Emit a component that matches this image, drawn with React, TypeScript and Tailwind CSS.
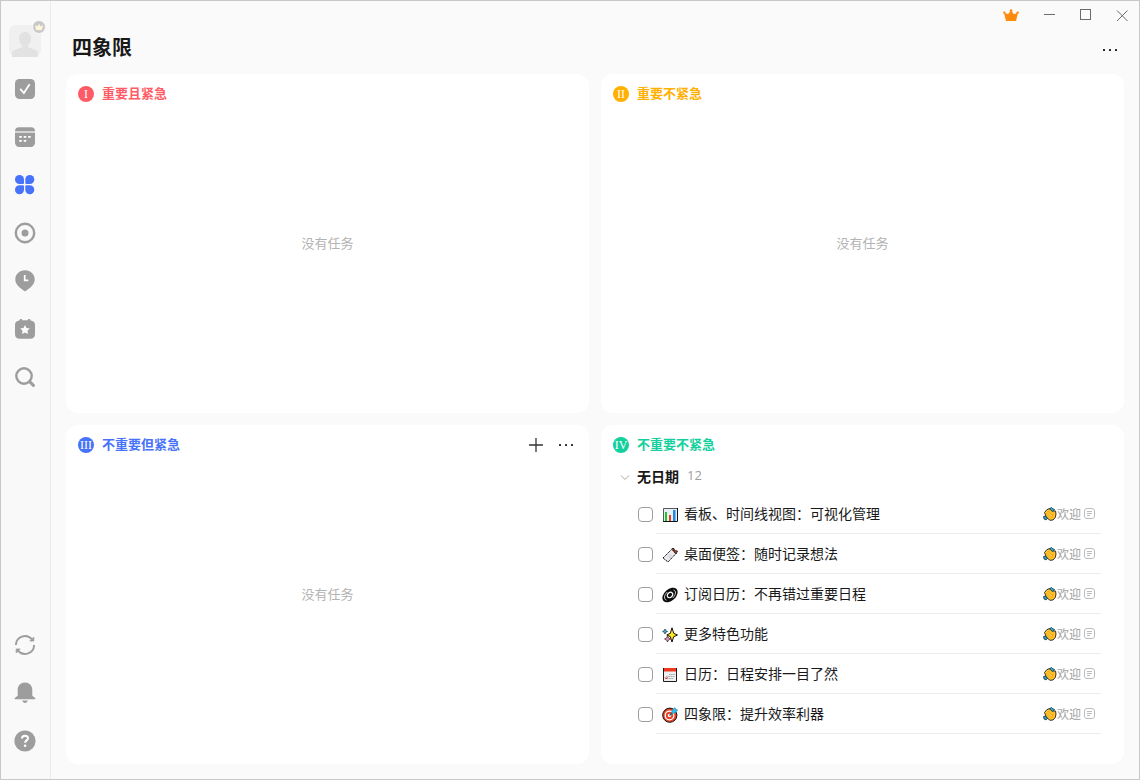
import type { ReactNode } from 'react';

interface Task {
  id: number;
  title: string;
  icon: ReactNode;
}

interface Quadrant {
  id: string;
  numeral: string;
  title: string;
  textClass: string;
  badgeClass: string;
  active?: boolean;
  tasks?: Task[];
}

/* 侧边栏图标 */

const CheckSquareIcon = () => (
  <svg width="20" height="20" viewBox="0 0 20 20" fill="none">
    <rect width="20" height="20" rx="4.5" fill="currentColor" />
    <path d="M5.2 9.800l3.700 4.300 5.700-8.800" stroke="#fff" strokeWidth="1.800" />
  </svg>
);

const CalendarIcon = () => (
  <svg width="20" height="20" viewBox="0 0 20 20" fill="none">
    <path d="M0 4.2A4 4 0 014 .2h12a4 4 0 014 4z" fill="currentColor" />
    <path d="M0 4h20v2H0z" fill="#d4d4d4" />
    <path d="M0 6h20v9.8a4.2 4.2 0 01-4.2 4.2H4.2A4.2 4.2 0 010 15.8z" fill="currentColor" />
    <path
      d="M4.2 9h2.6v1.7H4.2zM8.7 9h2.6v1.7H8.7zM13.2 9h2.6v1.7h-2.6zM4.2 13h2.6v1.7H4.2zM8.7 13h2.6v1.7H8.7z"
      fill="#fff"
    />
  </svg>
);

const MatrixIcon = () => (
  <svg width="20" height="20" viewBox="0 0 20 20" fill="currentColor">
    <path d="M4.5 0A4.5 4.5 0 019 4.5V8a1 1 0 01-1 1H4.5a4.5 4.5 0 010-9z" />
    <path d="M14.8 0a4.5 4.5 0 010 9h-3.5a1 1 0 01-1-1V4.5A4.5 4.5 0 0114.8 0z" />
    <path d="M4.5 10.3H8a1 1 0 011 1v3.5a4.5 4.5 0 11-4.5-4.5z" />
    <path d="M11.3 10.3h3.5a4.5 4.5 0 11-4.5 4.5v-3.5a1 1 0 011-1z" />
  </svg>
);

const FocusIcon = () => (
  <svg width="22" height="22" viewBox="0 0 22 22" fill="none">
    <circle cx="11" cy="11" r="9.2" stroke="currentColor" strokeWidth="2.4" />
    <circle cx="11" cy="11" r="3.5" fill="currentColor" />
  </svg>
);

const HabitIcon = () => (
  <svg width="20" height="22" viewBox="0 0 20 22" fill="none">
    <path
      d="M10 .3c5.600 0 9.700 4.100 9.700 9.200 0 3.500-2 6-4.700 8.300l-3.600 2.800a2.200 2.200 0 01-2.800 0L5 17.800C2.300 15.500.3 13 .3 9.500.3 4.400 4.400.3 10 .3z"
      fill="currentColor"
    />
    <path d="M9.700 5v5.300h3.600" stroke="#fff" strokeWidth="1.700" />
  </svg>
);

const CountdownIcon = () => (
  <svg width="20" height="20" viewBox="0 0 20 20" fill="none">
    <path
      d="M5.900 0c.8 0 1.300.5 1.400 1.300h5.400c.1-.8.600-1.300 1.400-1.300.9 0 1.500.6 1.500 1.400 2.600.2 4.400 1.800 4.400 4.300v9.600c0 2.800-1.800 4.500-4.600 4.500H4.600C1.800 19.800 0 18.100 0 15.300V5.700C0 3.200 1.800 1.600 4.400 1.400 4.400.600 5 0 5.900 0z"
      fill="currentColor"
    />
    <path d="M10 6l1.500 3 3.300.5-2.400 2.300.6 3.300-3-1.600-3 1.600.6-3.300-2.400-2.300 3.300-.5z" fill="#fff" />
  </svg>
);

const SearchIcon = () => (
  <svg width="20" height="20" viewBox="0 0 20 20" fill="none" stroke="currentColor">
    <circle cx="9" cy="9" r="7.700" strokeWidth="2.400" />
    <path d="M14.600 14.600l3.800 3.800" strokeWidth="3" strokeLinecap="round" />
  </svg>
);

const SyncIcon = () => (
  <svg width="20" height="20" viewBox="0 0 20 20" fill="none" stroke="currentColor" strokeWidth="1.900">
    <path d="M.9 10A9.100 9.100 0 0116.800 4.200" />
    <path d="M19.100 10A9.100 9.100 0 013.200 15.800" />
    <path d="M18.800 2v4h-4z" fill="currentColor" strokeWidth=".8" />
    <path d="M1.200 18v-4h4z" fill="currentColor" strokeWidth=".8" />
  </svg>
);

const BellIcon = () => (
  <svg width="22" height="22" viewBox="0 0 22 22" fill="currentColor">
    <path d="M11 .4c4.300 0 7.300 3.200 7.300 7.300v6.100l2.900 2.300c.6.500.3 1.100-.4 1.100H1.200c-.7 0-1-.6-.4-1.100l2.900-2.300V7.700C3.700 3.600 6.700.4 11 .4z" />
    <path d="M8.200 18.600h5.600c-.4 1.500-1.500 2.400-2.800 2.400s-2.400-.9-2.800-2.400z" />
  </svg>
);

const HelpIcon = () => (
  <svg width="22" height="22" viewBox="0 0 22 22" fill="none">
    <circle cx="11" cy="11" r="10.600" fill="currentColor" />
    <path
      d="M8 8.400c0-1.700 1.300-2.700 3-2.700s3 1 3 2.500c0 2.100-2.900 2.300-2.900 4.600"
      stroke="#fff"
      strokeWidth="2"
    />
    <circle cx="11.100" cy="15.800" r="1.300" fill="#fff" />
  </svg>
);

const CrownIcon = () => (
  <svg width="16" height="14" viewBox="0 0 16 14" fill="#ff8a0d">
    <path d="M3 13L.9 4.400l4.200 1.900L8 2l2.900 4.300 4.200-1.900L13 13z" />
    <circle cx="1.300" cy="4.600" r="1.200" />
    <circle cx="8" cy="2.600" r="1.300" />
    <circle cx="14.700" cy="4.600" r="1.200" />
  </svg>
);

const MoreIcon = () => (
  <svg width="16" height="4" viewBox="0 0 16 4" fill="currentColor">
    <rect x="1" y="1" width="2" height="2" rx=".5" />
    <rect x="7" y="1" width="2" height="2" rx=".5" />
    <rect x="13" y="1" width="2" height="2" rx=".5" />
  </svg>
);

const NoteIcon = () => (
  <svg width="11" height="11" viewBox="0 0 11 11" fill="none" stroke="#bdbdbd">
    <rect x=".5" y=".5" width="10" height="10" rx="2.500" />
    <path d="M3 3.500h5M3 5.500h5M3 7.500h3" />
  </svg>
);

/* 任务前的彩色小图标 */

const ChartEmoji = () => (
  <svg width="16" height="16" viewBox="0 0 16 16">
    <path d="M1 1h14v14H1z" fill="#e9eef3" />
    <path d="M1.500 15V1.500H15" fill="none" stroke="#55585c" />
    <path d="M3 5h2v9H3z" fill="#1fc42b" />
    <path d="M7 8h2v6H7z" fill="#ee3b22" />
    <path d="M11 3h2.500v11H11z" fill="#2288e6" />
    <path d="M1 14.500h14.500V1" fill="none" stroke="#111" />
  </svg>
);

const TagEmoji = () => (
  <svg width="16" height="16" viewBox="0 0 16 16">
    <path d="M1 11L9.500 2.500l4.500 4L6 15z" fill="#e9eaed" stroke="#111" strokeDasharray="1.600 .6" />
    <path d="M10 1.500h2l.5 2 3 .5-1.500 3z" fill="#ef3d1c" stroke="#111" strokeWidth=".8" />
    <path d="M6 8.500l2.500 2.500M8 7.500l1.500 1.500" stroke="#b9bcc3" />
  </svg>
);

const GalaxyEmoji = () => (
  <svg width="16" height="16" viewBox="0 0 16 16" fill="none">
    <g transform="rotate(-42 8 8)">
      <ellipse cx="8" cy="8" rx="8.800" ry="5.800" fill="#0c0c0c" />
      <path d="M2 9.500A6.500 4 0 018 4M14 6.500A6.500 4 0 018 12" stroke="#e8e8e8" strokeWidth=".8" />
      <ellipse cx="8" cy="8" rx="3" ry="2.300" stroke="#fff" strokeWidth="1.200" />
    </g>
  </svg>
);

const SparklesEmoji = () => (
  <svg width="16" height="16" viewBox="0 0 16 16" stroke="#111" strokeLinejoin="round">
    <path d="M10 .8l1.700 5.500L15.500 8l-3.800 1.700L10 15l-1.700-5.300L4.800 8l3.500-1.700z" fill="#ffea1a" />
    <path d="M3 2l.8 1.700 1.700.8-1.700.8L3 7l-.8-1.700L.6 4.500l1.600-.8z" fill="#27b8e8" strokeWidth=".6" />
    <path d="M5.500 9l1 2 2 1-2 1-1 2-1-2-2-1 2-1z" fill="#f48ac0" strokeWidth=".6" />
  </svg>
);

const DateEmoji = () => (
  <svg width="16" height="16" viewBox="0 0 16 16">
    <path d="M1 1h14v14H1z" fill="#eceef0" />
    <path d="M1 1h14v3.500H1z" fill="#ed3a1d" />
    <path d="M7 7.500h6M4 9.500h9M5 11.500h6" stroke="#a3a7ab" strokeDasharray="1.500 .7" />
    <path d="M3 10.500l1 1.500 1.500-2" fill="none" stroke="#ed3a1d" />
    <path d="M1.500 1v13.500h13V1" fill="none" stroke="#1b1b1b" />
  </svg>
);

const TargetEmoji = () => (
  <svg width="16" height="16" viewBox="0 0 16 16" fill="none">
    <circle cx="7.800" cy="8.200" r="7.100" fill="#ee4123" stroke="#111" />
    <circle cx="7.500" cy="8.500" r="4.300" stroke="#fff" strokeWidth="1.300" />
    <circle cx="7.500" cy="8.500" r="1.700" fill="#fff" />
    <path d="M7.500 8.500L12 4" stroke="#14657d" strokeWidth="1.200" />
    <path d="M9.800 3.500L13 .6l.7 1.700 2 .7-3 3.200-2.500.2z" fill="#31bce9" stroke="#2390b5" strokeWidth=".6" />
  </svg>
);

const ClapEmoji = () => (
  <svg width="14" height="14" viewBox="0 0 14 14" fill="none">
    <path
      d="M1.500 5.500L4 2.500l3-1 3 2.300 2.500.2.500 3-.7 3.500L10 13l-3 .3-3.500-2.800z"
      fill="#ffbf2a"
      stroke="#222"
      strokeWidth=".9"
    />
    <path d="M3.500 6l3 3M5.500 4.500l3 3M9.500 7v4" stroke="#e59a18" strokeWidth=".7" strokeDasharray="1 .7" />
    <path d="M6.500 1.800L8.500.5l1.300 1.200 1.700.8-1.700 2.200z" fill="#2fa9cc" stroke="#102e3a" strokeWidth=".8" />
    <path d="M.6 9.500l1.900-.4 1.900 2-1.400 1.800-2-1z" fill="#2fa9cc" stroke="#102e3a" strokeWidth=".8" />
  </svg>
);

const navItems = [
  { label: '任务', icon: <CheckSquareIcon /> },
  { label: '日历', icon: <CalendarIcon /> },
  { label: '四象限', icon: <MatrixIcon />, active: true },
  { label: '专注', icon: <FocusIcon /> },
  { label: '习惯', icon: <HabitIcon /> },
  { label: '倒数日', icon: <CountdownIcon /> },
  { label: '搜索', icon: <SearchIcon /> },
];

const footerItems = [
  { label: '同步', icon: <SyncIcon /> },
  { label: '通知', icon: <BellIcon /> },
  { label: '帮助', icon: <HelpIcon /> },
];

const tasks: Task[] = [
  { id: 1, title: '看板、时间线视图：可视化管理', icon: <ChartEmoji /> },
  { id: 2, title: '桌面便签：随时记录想法', icon: <TagEmoji /> },
  { id: 3, title: '订阅日历：不再错过重要日程', icon: <GalaxyEmoji /> },
  { id: 4, title: '更多特色功能', icon: <SparklesEmoji /> },
  { id: 5, title: '日历：日程安排一目了然', icon: <DateEmoji /> },
  { id: 6, title: '四象限：提升效率利器', icon: <TargetEmoji /> },
];

const quadrants: Quadrant[] = [
  { id: 'q1', numeral: 'I', title: '重要且紧急', textClass: 'text-[#ff5b66]', badgeClass: 'bg-[#ff5b66]' },
  { id: 'q2', numeral: 'II', title: '重要不紧急', textClass: 'text-[#ffb000]', badgeClass: 'bg-[#ffb000]' },
  {
    id: 'q3',
    numeral: 'III',
    title: '不重要但紧急',
    textClass: 'text-[#4772fa]',
    badgeClass: 'bg-[#4772fa]',
    active: true,
  },
  {
    id: 'q4',
    numeral: 'IV',
    title: '不重要不紧急',
    textClass: 'text-[#13d09d]',
    badgeClass: 'bg-[#13d09d]',
    tasks,
  },
];

function NavButton({ label, icon, active }: { label: string; icon: ReactNode; active?: boolean }) {
  return (
    <button
      type="button"
      aria-label={label}
      className={`flex h-12 w-12 items-center justify-center ${active ? 'text-[#4772fa]' : 'text-[#9d9d9d]'}`}
    >
      {icon}
    </button>
  );
}

function Sidebar() {
  return (
    <nav className="flex w-[50px] shrink-0 flex-col items-start border-r border-[#ebebeb] bg-[#f9f9f9] pt-4 pb-3.5">
      <button type="button" aria-label="账户" className="relative flex h-12 w-12 items-center justify-center">
        <svg width="32" height="32" viewBox="0 0 32 32">
          <rect width="32" height="32" rx="7" fill="#f0f0f0" />
          <path
            d="M16 7c3.600 0 6 2.600 6 6.300 0 3-1.300 5.700-3 7.200v1.700l7.500 2.700c1.500.6 2.500 1.700 2.500 3.300V32H3v-3.800c0-1.600 1-2.700 2.500-3.300l7.500-2.700v-1.700c-1.700-1.500-3-4.200-3-7.200C10 9.600 12.400 7 16 7z"
            fill="#e2e2e2"
          />
        </svg>
        <svg className="absolute top-[3px] right-[3px]" width="14" height="14" viewBox="0 0 14 14">
          <circle cx="7" cy="7" r="6.500" fill="#c8c8c8" stroke="#f9f9f9" />
          <path d="M4.300 9.700l-.7-4 2 1.100L7 4.500l1.400 2.300 2-1.100-.7 4z" fill="#fff6dd" stroke="#fff6dd" strokeWidth=".8" />
        </svg>
      </button>
      {navItems.map((item) => (
        <NavButton key={item.label} {...item} />
      ))}
      <div className="mt-auto">
        {footerItems.map((item) => (
          <NavButton key={item.label} {...item} />
        ))}
      </div>
    </nav>
  );
}

function WindowControls() {
  return (
    <div className="flex h-7 items-center justify-end text-[#6b6b6b]">
      <button type="button" aria-label="高级会员" className="flex h-7 w-10 items-center justify-center">
        <CrownIcon />
      </button>
      <button type="button" aria-label="最小化" className="flex h-7 w-9 items-center justify-center">
        <svg width="12" height="12" viewBox="0 0 12 12" stroke="currentColor">
          <path d="M1 5.500h11" />
        </svg>
      </button>
      <button type="button" aria-label="最大化" className="flex h-7 w-9 items-center justify-center">
        <svg width="12" height="12" viewBox="0 0 12 12" fill="none" stroke="currentColor">
          <rect x="1.500" y=".5" width="10" height="10" />
        </svg>
      </button>
      <button type="button" aria-label="关闭" className="flex h-7 w-9 items-center justify-center">
        <svg width="14" height="14" viewBox="0 0 14 14" stroke="currentColor">
          <path d="M3 2.500l10.500 10.500M13.500 2.500L3 13" />
        </svg>
      </button>
    </div>
  );
}

function TaskRow({ task }: { task: Task }) {
  return (
    <li className="flex h-10 items-center gap-[3px]">
      <input
        id={`task-${task.id}`}
        type="checkbox"
        className="size-[15px] shrink-0 appearance-none rounded-[4px] border border-[#9f9f9f] bg-white checked:bg-[#9f9f9f]"
      />
      <div className="flex h-full min-w-0 flex-1 items-center border-b border-[#ededed] pr-1.5 pl-1.5">
        <label htmlFor={`task-${task.id}`} className="flex min-w-0 flex-1 items-center gap-1.5">
          <span className="shrink-0 pt-0.5">{task.icon}</span>
          <span className="truncate pb-0.5 text-sm text-[#191919]">{task.title}</span>
        </label>
        <span className="flex shrink-0 items-center text-xs text-[#a0a0a0]">
          <ClapEmoji />
          <span className="mr-[3px]">欢迎</span>
          <NoteIcon />
        </span>
      </div>
    </li>
  );
}

function QuadrantCard({ quadrant }: { quadrant: Quadrant }) {
  return (
    <section className="flex min-h-0 flex-col overflow-hidden rounded-xl bg-white">
      <header className="flex h-10 shrink-0 items-center pr-2 pl-3">
        <span
          className={`flex size-4 shrink-0 items-center justify-center rounded-full font-['Liberation_Serif',serif] text-xs text-white ${quadrant.badgeClass}`}
        >
          {quadrant.numeral}
        </span>
        <h2 className={`ml-2 flex-1 pb-0.5 text-[13px] leading-5 font-bold ${quadrant.textClass}`}>{quadrant.title}</h2>
        {quadrant.active && (
          <div className="flex text-[#333]">
            <button type="button" aria-label="添加任务" className="flex h-7 w-[30px] items-center justify-center">
              <svg width="14" height="14" viewBox="0 0 14 14" stroke="currentColor" strokeWidth="1.300">
                <path d="M7 0v14M0 7h14" />
              </svg>
            </button>
            <button type="button" aria-label="更多" className="flex h-7 w-[30px] items-center justify-center">
              <MoreIcon />
            </button>
          </div>
        )}
      </header>

      {quadrant.tasks ? (
        <>
          <button type="button" className="flex h-6 shrink-0 items-center pl-[19px] text-left">
            <svg width="10" height="10" viewBox="0 0 10 10" fill="none" stroke="#a8a8a8">
              <path d="M1 3.500l4 4 4-4" />
            </svg>
            <span className="ml-[7px] pb-[3px] text-sm font-bold text-[#191919]">无日期</span>
            <span className="ml-2 pb-[3px] font-['Open_Sans',sans-serif] text-[13px] text-[#a0a0a0]">12</span>
          </button>
          <ul className="mt-[5px] pr-[23px] pl-[37px]">
            {quadrant.tasks.map((task) => (
              <TaskRow key={task.id} task={task} />
            ))}
          </ul>
        </>
      ) : (
        <div className="flex flex-1 items-center justify-center pb-[42px] text-[13px] text-[#b3b3b3]">没有任务</div>
      )}
    </section>
  );
}

export default function App() {
  return (
    <div className="flex h-screen border border-[#c8c8c8] bg-[#fafafa] font-['Noto_Sans_CJK_SC',sans-serif] text-[#191919]">
      <Sidebar />
      <main className="flex min-w-0 flex-1 flex-col">
        <WindowControls />
        <div className="flex h-9 shrink-0 items-center justify-between pr-[13px] pl-[21px]">
          <h1 className="text-xl font-bold">四象限</h1>
          <button type="button" aria-label="更多选项" className="flex h-9 w-8 items-center justify-center pt-1.5">
            <MoreIcon />
          </button>
        </div>
        <div className="grid min-h-0 flex-1 grid-cols-2 grid-rows-2 gap-3 px-[15px] pt-[9px] pb-[15px]">
          {quadrants.map((quadrant) => (
            <QuadrantCard key={quadrant.id} quadrant={quadrant} />
          ))}
        </div>
      </main>
    </div>
  );
}
